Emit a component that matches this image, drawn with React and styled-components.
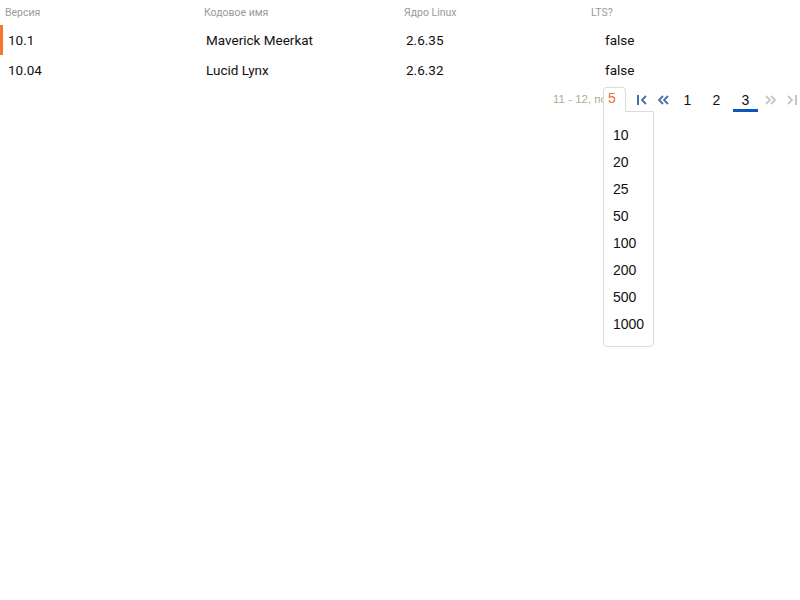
import React from 'react';
import styled, { createGlobalStyle } from 'styled-components';

const GlobalStyle = createGlobalStyle`
  html, body {
    margin: 0;
    padding: 0;
    background: #fff;
    height: 100%;
  }
  body {
    font-family: Roboto, 'Liberation Sans', sans-serif;
    color: #111;
  }
  #root {
    min-height: 600px;
  }
`;

const Table = styled.div`
  width: 800px;
  min-height: 600px;
`;

const HeadRow = styled.div`
  display: grid;
  grid-template-columns: 199px 200px 187px 1fr;
  height: 25px;
  align-items: center;
`;

const HeadCell = styled.div`
  padding-left: 5px;
  font-size: 10.5px;
  color: #9a9a9a;
`;

const BodyRow = styled.div`
  display: grid;
  grid-template-columns: 200px 200px 199px 1fr;
  height: 30px;
  align-items: stretch;
`;

const Cell = styled.div`
  display: flex;
  align-items: center;
  padding-left: ${(p) => (p.$first ? '5px' : '6px')};
  border-left: ${(p) => (p.$first ? `3px solid ${p.$active ? '#fa7431' : 'transparent'}` : 'none')};
  font-size: 13.5px;
  color: #111;
  white-space: nowrap;
`;

const Pager = styled.div`
  display: flex;
  justify-content: flex-end;
  align-items: flex-start;
  height: 25px;
  margin-top: 2px;
  font-family: 'Liberation Sans', Arial, sans-serif;
`;

const Info = styled.div`
  flex: none;
  width: 50px;
  overflow: hidden;
  white-space: nowrap;
  font-size: 11.5px;
  color: #b5a98f;
  line-height: 25px;
`;

const SizeWrap = styled.div`
  flex: none;
  position: relative;
  width: 23px;
  height: 25px;
  margin-right: 7px;
`;

const SizeTab = styled.div`
  position: relative;
  z-index: 2;
  box-sizing: border-box;
  width: 23px;
  height: 25px;
  border: 1px solid #dcdcdc;
  border-bottom: none;
  border-radius: 4px 4px 0 0;
  background: #fff;
  color: #f26b3a;
  font-size: 14px;
  padding: 2px 0 0 4px;
`;

const Menu = styled.div`
  position: absolute;
  z-index: 1;
  top: 24px;
  left: 0;
  box-sizing: border-box;
  width: 51px;
  height: 236px;
  padding: 10px 0 8px;
  background: #fff;
  border: 1px solid #dcdcdc;
  border-radius: 0 0 4px 4px;
`;

const MenuItem = styled.div`
  height: 27px;
  line-height: 27px;
  padding-left: 9px;
  font-size: 14px;
  color: #111;
`;

const PageButton = styled.div`
  flex: none;
  box-sizing: border-box;
  width: ${(p) => (p.$icon ? '17px' : '25px')};
  height: 25px;
  margin-left: ${(p) => (p.$lead ? '0' : '4px')};
  display: flex;
  align-items: center;
  justify-content: center;
  font-size: 14px;
  color: #111;
  border-bottom: 3px solid ${(p) => (p.$current ? '#0b57b8' : 'transparent')};
  padding-top: 3px;
`;

const IconFirst = ({ color }) => (
  <svg width="12" height="12" viewBox="0 0 12 12">
    <rect x="1" y="1" width="2" height="10" fill={color} />
    <polyline points="10,2 6,6 10,10" fill="none" stroke={color} strokeWidth="1.8" />
  </svg>
);

const IconLast = ({ color }) => (
  <svg width="12" height="12" viewBox="0 0 12 12">
    <polyline points="2,2 6,6 2,10" fill="none" stroke={color} strokeWidth="1.8" />
    <rect x="9" y="1" width="2" height="10" fill={color} />
  </svg>
);

const IconPrev = ({ color }) => (
  <svg width="12" height="12" viewBox="0 0 12 12">
    <polyline points="6,2 2,6 6,10" fill="none" stroke={color} strokeWidth="1.8" />
    <polyline points="11,2 7,6 11,10" fill="none" stroke={color} strokeWidth="1.8" />
  </svg>
);

const IconNext = ({ color }) => (
  <svg width="12" height="12" viewBox="0 0 12 12">
    <polyline points="1,2 5,6 1,10" fill="none" stroke={color} strokeWidth="1.8" />
    <polyline points="6,2 10,6 6,10" fill="none" stroke={color} strokeWidth="1.8" />
  </svg>
);

const releases = [
  { version: '10.1', name: 'Maverick Meerkat', kernel: '2.6.35', lts: 'false' },
  { version: '10.04', name: 'Lucid Lynx', kernel: '2.6.32', lts: 'false' },
];

const sizes = [10, 20, 25, 50, 100, 200, 500, 1000];

export default function App() {
  const active = '#4a6ba6';
  const muted = '#c6c6c6';
  return (
    <>
      <GlobalStyle />
      <Table>
        <HeadRow>
          <HeadCell>Версия</HeadCell>
          <HeadCell>Кодовое имя</HeadCell>
          <HeadCell>Ядро Linux</HeadCell>
          <HeadCell>LTS?</HeadCell>
        </HeadRow>
        {releases.map((r, i) => (
          <BodyRow key={r.version}>
            <Cell $first $active={i === 0}>{r.version}</Cell>
            <Cell>{r.name}</Cell>
            <Cell>{r.kernel}</Cell>
            <Cell>{r.lts}</Cell>
          </BodyRow>
        ))}
        <Pager>
          <Info>11 - 12, по</Info>
          <SizeWrap>
            <SizeTab>5</SizeTab>
            <Menu>
              {sizes.map((s) => (
                <MenuItem key={s}>{s}</MenuItem>
              ))}
            </Menu>
          </SizeWrap>
          <PageButton $icon $lead>
            <IconFirst color={active} />
          </PageButton>
          <PageButton $icon>
            <IconPrev color={active} />
          </PageButton>
          <PageButton>1</PageButton>
          <PageButton>2</PageButton>
          <PageButton $current>3</PageButton>
          <PageButton $icon>
            <IconNext color={muted} />
          </PageButton>
          <PageButton $icon>
            <IconLast color={muted} />
          </PageButton>
        </Pager>
      </Table>
    </>
  );
}
